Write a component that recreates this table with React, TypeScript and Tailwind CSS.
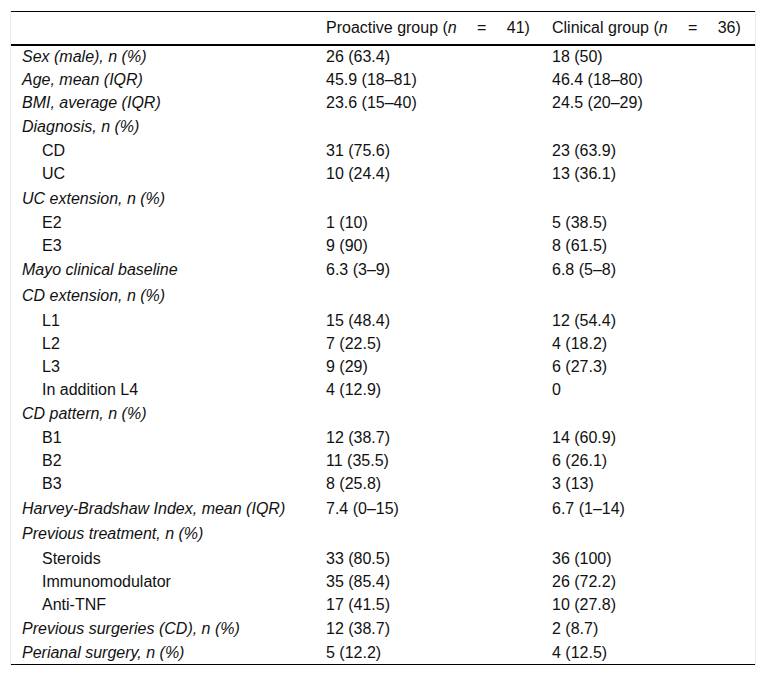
import React from "react";

type Row = {
  label: string;
  a: string;
  b: string;
  sub?: boolean;
  group?: boolean;
};

const rows: Row[] = [
  { label: "Sex (male), n (%)", a: "26 (63.4)", b: "18 (50)" },
  { label: "Age, mean (IQR)", a: "45.9 (18–81)", b: "46.4 (18–80)" },
  { label: "BMI, average (IQR)", a: "23.6 (15–40)", b: "24.5 (20–29)" },
  { label: "Diagnosis, n (%)", a: "", b: "", group: true },
  { label: "CD", a: "31 (75.6)", b: "23 (63.9)", sub: true },
  { label: "UC", a: "10 (24.4)", b: "13 (36.1)", sub: true },
  { label: "UC extension, n (%)", a: "", b: "", group: true },
  { label: "E2", a: "1 (10)", b: "5 (38.5)", sub: true },
  { label: "E3", a: "9 (90)", b: "8 (61.5)", sub: true },
  { label: "Mayo clinical baseline", a: "6.3 (3–9)", b: "6.8 (5–8)", group: true },
  { label: "CD extension, n (%)", a: "", b: "", group: true },
  { label: "L1", a: "15 (48.4)", b: "12 (54.4)", sub: true },
  { label: "L2", a: "7 (22.5)", b: "4 (18.2)", sub: true },
  { label: "L3", a: "9 (29)", b: "6 (27.3)", sub: true },
  { label: "In addition L4", a: "4 (12.9)", b: "0", sub: true },
  { label: "CD pattern, n (%)", a: "", b: "", group: true },
  { label: "B1", a: "12 (38.7)", b: "14 (60.9)", sub: true },
  { label: "B2", a: "11 (35.5)", b: "6 (26.1)", sub: true },
  { label: "B3", a: "8 (25.8)", b: "3 (13)", sub: true },
  { label: "Harvey-Bradshaw Index, mean (IQR)", a: "7.4 (0–15)", b: "6.7 (1–14)", group: true },
  { label: "Previous treatment, n (%)", a: "", b: "", group: true },
  { label: "Steroids", a: "33 (80.5)", b: "36 (100)", sub: true },
  { label: "Immunomodulator", a: "35 (85.4)", b: "26 (72.2)", sub: true },
  { label: "Anti-TNF", a: "17 (41.5)", b: "10 (27.8)", sub: true },
  { label: "Previous surgeries (CD), n (%)", a: "12 (38.7)", b: "2 (8.7)", group: true },
  { label: "Perianal surgery, n (%)", a: "5 (12.2)", b: "4 (12.5)" },
];

const GroupHead = ({ name, n }: { name: string; n: number }) => (
  <span className="whitespace-nowrap">
    {name} (<i>n</i>
    <span className="inline-block w-[50px] text-center">=</span>
    {n})
  </span>
);

export default function App() {
  return (
    <div className="bg-white w-[766px] h-[676px] pt-[11px] pl-[10px] font-['Liberation_Sans',Arial,sans-serif] text-[16px] leading-[18px] text-[#111]">
      <div className="w-[746px] border-x border-[#ececec]">
        <table className="w-full border-collapse">
          <thead>
            <tr className="border-t border-black border-b-2 border-b-black h-[33px]">
              <th className="w-[305px]"></th>
              <th className="w-[226px] text-left font-normal pl-[10px]">
                <GroupHead name="Proactive group" n={41} />
              </th>
              <th className="text-left font-normal pl-[10px]">
                <GroupHead name="Clinical group" n={36} />
              </th>
            </tr>
          </thead>
          <tbody className="border-b border-black">
            {rows.map((r, i) => (
              <tr key={i} className={r.group ? "h-[25.75px]" : "h-[23px]"}>
                <td className={r.sub ? "pl-[31px] pt-[1px]" : "pl-[11px] pt-[1px] italic"}>{r.label}</td>
                <td className="pl-[10px] pt-[1px]">{r.a}</td>
                <td className="pl-[10px] pt-[1px]">{r.b}</td>
              </tr>
            ))}
          </tbody>
        </table>
      </div>
    </div>
  );
}
